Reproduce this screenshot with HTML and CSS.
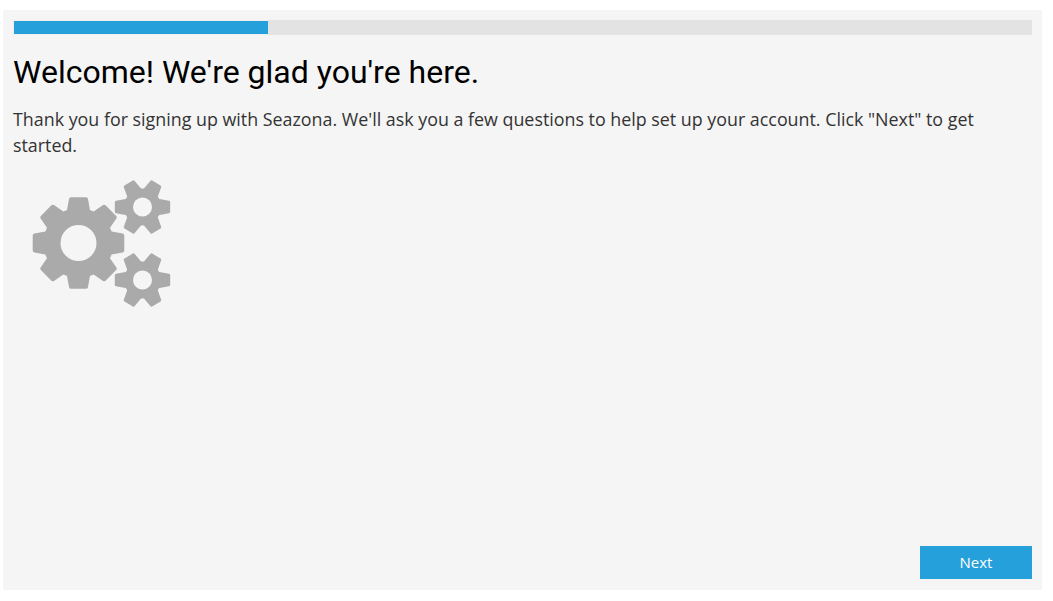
FILE: index.html
```html
<!DOCTYPE html>
<html lang="en">
<head>
    <meta charset="UTF-8">
    <meta name="viewport" content="width=device-width, initial-scale=1.0">
    <title>Welcome</title>
    <link rel="stylesheet" href="styles.css">
</head>
<body>
    <div class="wizard">
        <div class="progress"><div class="progress-fill"></div></div>
        <h1>Welcome! We're glad you're here.</h1>
        <p>Thank you for signing up with Seazona. We'll ask you a few questions to help set up your account. Click "Next" to get started.</p>
        <svg class="gears" width="140" height="130" viewBox="0 0 140 130">
            <defs>
                <polygon id="bigTooth" class="big-tooth" points="-7.5,-43.8 7.5,-43.8 10,-30 -10,-30"/>
                <polygon id="smallTooth" class="small-tooth" points="-4.8,-26.2 4.8,-26.2 7,-14 -7,-14"/>
                <g id="bigGear">
                    <circle r="35"/>
                    <use href="#bigTooth"/>
                    <use href="#bigTooth" transform="rotate(45)"/>
                    <use href="#bigTooth" transform="rotate(90)"/>
                    <use href="#bigTooth" transform="rotate(135)"/>
                    <use href="#bigTooth" transform="rotate(180)"/>
                    <use href="#bigTooth" transform="rotate(225)"/>
                    <use href="#bigTooth" transform="rotate(270)"/>
                    <use href="#bigTooth" transform="rotate(315)"/>
                    <circle class="hole" r="18"/>
                </g>
                <g id="smallGear">
                    <circle r="18.5"/>
                    <use href="#smallTooth" transform="rotate(30)"/>
                    <use href="#smallTooth" transform="rotate(90)"/>
                    <use href="#smallTooth" transform="rotate(150)"/>
                    <use href="#smallTooth" transform="rotate(210)"/>
                    <use href="#smallTooth" transform="rotate(270)"/>
                    <use href="#smallTooth" transform="rotate(330)"/>
                    <circle class="hole" r="9.5"/>
                </g>
            </defs>
            <use href="#bigGear" x="46.5" y="65"/>
            <use href="#smallGear" x="110.5" y="29"/>
            <use href="#smallGear" x="110.5" y="102"/>
        </svg>
        <div class="actions">
            <button>Next</button>
        </div>
    </div>
</body>
</html>
```

FILE: styles.css
```css
html, body {
    height: 100%;
}
body {
    margin: 0;
    padding: 10px 11px 11px 3px;
    box-sizing: border-box;
    background-color: white;
}
.wizard {
    display: flex;
    flex-direction: column;
    height: 100%;
    box-sizing: border-box;
    padding: 10px 10px 11px;
    background-color: #f5f5f5;
}
.progress {
    height: 15px;
    background-color: #e3e3e3;
}
.progress-fill {
    width: 255px;
    height: 100%;
    box-sizing: border-box;
    background-color: #26a0da;
    border: 1px solid #eeeeee;
    border-right: none;
}
h1 {
    margin: 18px 0 0;
    font-family: Roboto, sans-serif;
    font-size: 32px;
    font-weight: 400;
    line-height: 38px;
    color: #000;
}
p {
    margin: 15px 0 0;
    font-family: "Open Sans", sans-serif;
    font-size: 17.85px;
    line-height: 26px;
    color: #333;
}
.gears {
    display: block;
    margin: 20px 0 0 19px;
    fill: #aaaaaa;
}
.gears polygon {
    stroke: #aaaaaa;
    stroke-linejoin: round;
}
.gears .big-tooth {
    stroke-width: 4;
}
.gears .small-tooth {
    stroke-width: 3;
}
.gears .hole {
    fill: #f5f5f5;
}
.actions {
    display: flex;
    justify-content: flex-end;
    margin-top: auto;
}
button {
    width: 112px;
    height: 33px;
    padding: 0 0 2px;
    background-color: #26a0da;
    color: white;
    border: none;
    font-family: "Open Sans", sans-serif;
    font-size: 15px;
}
```
